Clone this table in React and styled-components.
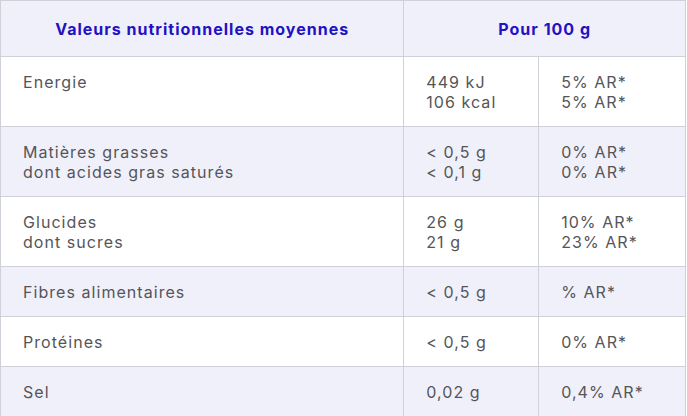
import React from "react";
import styled, {createGlobalStyle} from "styled-components";

const GlobalStyle = createGlobalStyle`
  body {
    margin: 0;
    background: #ffffff;
    font-family: "Inter", "Liberation Sans", sans-serif;
  }
`;

const Table = styled.table`
  width: 686px;
  border-collapse: collapse;
  border: 1px solid #d0d0d8;
  font-size: 16px;
  line-height: 20px;
  letter-spacing: 1.05px;
  color: #555558;
`;

const Row = styled.tr`
  background: ${(p) => (p.$alt ? "#f0f0fb" : "#ffffff")};
`;

const HeadCell = styled.th`
  padding: 18px 22px 17px;
  border: 1px solid #d0d0d8;
  font-weight: 700;
  letter-spacing: 1px;
  color: #2311c2;
  text-align: center;
`;

const Cell = styled.td`
  width: ${(p) => p.$w}px;
  padding: 15px 22px 14px;
  border: 1px solid #d0d0d8;
  vertical-align: top;
  text-align: left;
`;

const rows = [
    {label: ["Energie"], qty: ["449 kJ", "106 kcal"], ar: ["5% AR*", "5% AR*"]},
    {label: ["Matières grasses", "dont acides gras saturés"], qty: ["< 0,5 g", "< 0,1 g"], ar: ["0% AR*", "0% AR*"]},
    {label: ["Glucides", "dont sucres"], qty: ["26 g", "21 g"], ar: ["10% AR*", "23% AR*"]},
    {label: ["Fibres alimentaires"], qty: ["< 0,5 g"], ar: ["% AR*"]},
    {label: ["Protéines"], qty: ["< 0,5 g"], ar: ["0% AR*"]},
    {label: ["Sel"], qty: ["0,02 g"], ar: ["0,4% AR*"]},
];

const Lines = ({items}) => items.map((t, i) => <div key={i}>{t}</div>);

const App = () => {
    return (
        <>
            <GlobalStyle/>
            <Table>
                <thead>
                <Row $alt>
                    <HeadCell>Valeurs nutritionnelles moyennes</HeadCell>
                    <HeadCell colSpan={2}>Pour 100 g</HeadCell>
                </Row>
                </thead>
                <tbody>
                {rows.map((r, i) => (
                    <Row key={i} $alt={i % 2 === 1}>
                        <Cell $w={359}><Lines items={r.label}/></Cell>
                        <Cell $w={90}><Lines items={r.qty}/></Cell>
                        <Cell $w={102}><Lines items={r.ar}/></Cell>
                    </Row>
                ))}
                </tbody>
            </Table>
        </>
    );
};

export default App;
